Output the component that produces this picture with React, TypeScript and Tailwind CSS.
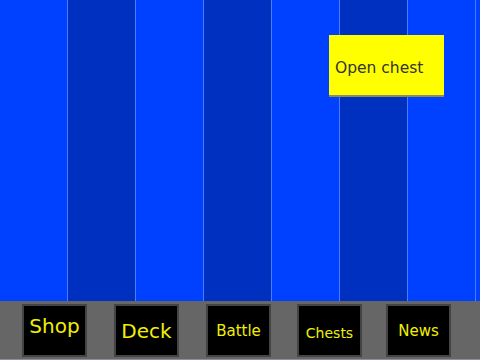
import React from "react";

const cols = [0, 1, 2, 3, 4, 5, 6];

const tabs = [
  { label: "Shop", cls: "ml-[22px] text-[20px] pt-[10px]" },
  { label: "Deck", cls: "ml-[27px] text-[20px] pt-[15px]" },
  { label: "Battle", cls: "ml-[27px] text-[15px] pt-[18px]" },
  { label: "Chests", cls: "ml-[26px] text-[14px] pt-[20px]" },
  { label: "News", cls: "ml-[24px] text-[15px] pt-[18px]" },
];

export default function App() {
  return (
    <div
      className="w-[480px] h-[360px] overflow-hidden flex flex-col bg-[#0040ff]"
      style={{ fontFamily: '"Comic Sans MS", "DejaVu Sans", sans-serif' }}
    >
      {/* board */}
      <div className="relative h-[301px] flex">
        {cols.map((i) => (
          <div
            key={i}
            className={
              "w-[68px] h-full border-r border-[#4a7cff] " +
              (i % 2 === 1 ? "bg-[#0030c0]" : "bg-[#0040ff]")
            }
          />
        ))}

        <button className="absolute left-[329px] top-[35px] w-[115px] h-[62px] bg-[#ffff00] border-b-2 border-[#8a8a60] text-left pl-[6px] pt-[8px] text-[15.5px] text-[#333333]">
          Open chest
        </button>
      </div>

      {/* bottom tabs */}
      <div className="h-[59px] bg-[#666666] border-b border-[#8c8ca8] flex items-start pt-[3px]">
        {tabs.map((t) => (
          <div
            key={t.label}
            className={
              "w-[65px] h-[53px] bg-black border-2 border-[#444444] text-center text-[#f0f000] leading-none " +
              t.cls
            }
          >
            {t.label}
          </div>
        ))}
      </div>
    </div>
  );
}
